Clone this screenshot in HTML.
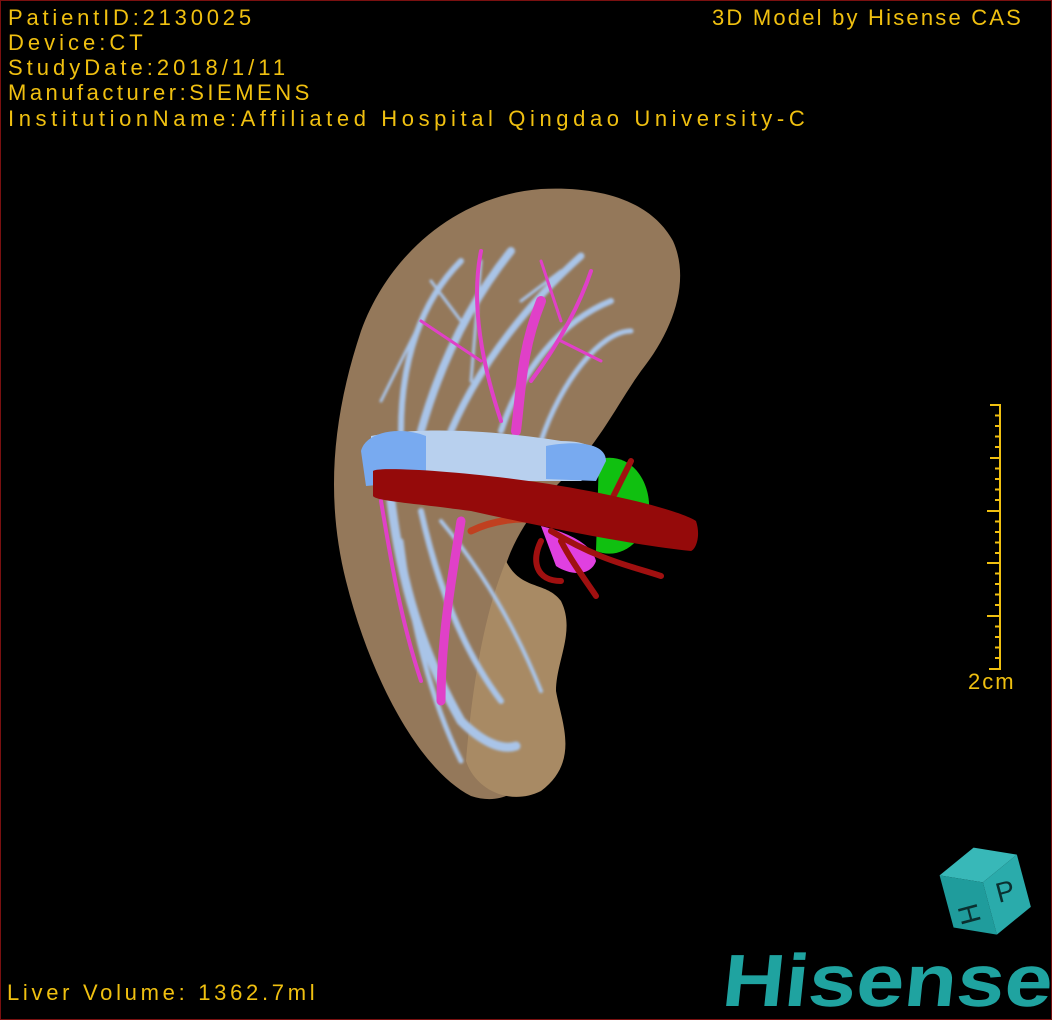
<!DOCTYPE html>
<html><head><meta charset="utf-8"><style>
html,body{margin:0;padding:0;background:#000;}
#c{position:relative;width:1052px;height:1020px;background:#000;overflow:hidden;box-sizing:border-box;border:1px solid #7a1010;}
.t{position:absolute;color:#f0c010;font-family:"Liberation Sans",sans-serif;font-size:22px;letter-spacing:4px;white-space:nowrap;line-height:25px;}
</style></head><body><div id="c">
<svg width="1052" height="1020" style="position:absolute;left:0;top:0">
<defs><filter id="b"><feGaussianBlur stdDeviation="1.2"/></filter></defs>
<path d="M540 188 C600 185 650 200 672 240 C690 280 672 330 640 370 C615 405 600 440 560 480 C530 510 510 540 500 580 C490 640 500 700 520 760 C530 790 500 805 470 795 C420 770 370 680 345 580 C325 500 330 420 360 330 C385 260 450 195 540 188Z" fill="#94785a"/>
<path d="M505 560 C520 590 545 580 560 600 C575 630 555 660 555 690 C560 720 580 760 540 790 C510 805 475 790 465 760 C470 700 480 620 505 560Z" fill="#a88a64"/>
<g fill="none" stroke="#a9c4e8" stroke-linecap="round" filter="url(#b)">
<path d="M420 430 C440 360 470 300 510 250" stroke-width="8"/>
<path d="M450 430 C480 360 530 300 580 255" stroke-width="7"/>
<path d="M500 430 C520 370 560 320 610 300" stroke-width="6"/>
<path d="M400 430 C400 360 420 300 460 260" stroke-width="6"/>
<path d="M540 440 C560 380 600 330 630 330" stroke-width="5"/>
<path d="M390 500 C400 580 420 650 460 720 C480 740 500 750 515 745" stroke-width="9"/>
<path d="M420 510 C440 600 470 660 500 700" stroke-width="6"/>
<path d="M440 520 C490 580 520 640 540 690" stroke-width="4"/>
<path d="M400 540 C410 620 430 700 460 760" stroke-width="5"/>
<path d="M380 400 L430 300 M430 280 L460 320 M520 300 L560 270 M480 260 L470 380" stroke-width="3"/>
</g>
<g fill="none" stroke="#e040c8" stroke-linecap="round">
<path d="M515 430 C520 390 520 350 540 300" stroke-width="10"/>
<path d="M500 420 C480 360 470 300 480 250" stroke-width="4"/>
<path d="M530 380 C560 340 580 300 590 270" stroke-width="4"/>
<path d="M460 520 C450 580 440 640 440 700" stroke-width="9"/>
<path d="M380 500 C390 560 400 620 420 680" stroke-width="4"/>
<path d="M420 320 L480 360 M560 340 L600 360 M540 260 L560 320" stroke-width="3"/>
</g>
<path d="M598 458 C630 450 650 480 648 510 C645 540 620 560 595 550 Z" fill="#10c010"/>
<path d="M370 435 C420 425 500 430 560 440 C590 440 605 450 600 470 L580 480 L370 480 Z" fill="#b8d0ee"/>
<path d="M360 450 C365 430 400 425 425 435 L425 480 L365 485 Z M545 445 C570 440 605 440 605 460 L595 480 L545 478Z" fill="#78aaf0"/>
<path d="M540 525 C560 530 590 540 595 560 C590 575 570 575 555 565 Z" fill="#e040e0"/>
<g fill="none" stroke="#a01010" stroke-linecap="round">
<path d="M540 540 C530 560 535 580 560 580 M550 530 C600 560 630 565 660 575 M560 540 C570 560 585 580 595 595 M600 520 L630 460" stroke-width="6"/>
<path d="M470 530 C490 520 520 515 540 520" stroke="#c04020" stroke-width="7"/>
</g>
<path d="M372 470 C375 465 470 470 560 485 C620 495 680 510 695 520 C700 535 695 548 690 550 C640 545 560 530 470 510 C410 502 375 500 372 495 Z" fill="#950a0a"/>
<g stroke="#f0c010" stroke-width="2">
<line x1="999" y1="403" x2="999" y2="669"/>
<line x1="989" y1="404" x2="999" y2="404"/><line x1="989" y1="457" x2="999" y2="457"/><line x1="986" y1="510" x2="999" y2="510"/><line x1="986" y1="562" x2="999" y2="562"/><line x1="986" y1="615" x2="999" y2="615"/><line x1="988" y1="668" x2="999" y2="668"/>
<path d="M994 414.5h5M994 425h5M994 435.5h5M994 446h5M994 467.5h5M994 478h5M994 488.5h5M994 499h5M994 520.5h5M994 531h5M994 541.5h5M994 552h5M994 572.5h5M994 583h5M994 593.5h5M994 604h5M994 625.5h5M994 636h5M994 646.5h5M994 657h5"/>
</g>
<g transform="translate(985,893) rotate(-15)">
<polygon points="-40,-30 0,-48 40,-30 0,-12" fill="#38b8b8"/>
<polygon points="-40,-30 0,-12 0,42 -40,24" fill="#1f9c9c"/>
<polygon points="0,-12 40,-30 40,24 0,42" fill="#2aabab"/>
<text x="-22" y="14" font-family="Liberation Sans" font-size="28" fill="#0a3030" transform="rotate(90 -22 5)">H</text>
<text x="10" y="12" font-family="Liberation Sans" font-size="28" fill="#0a3030">P</text>
</g>
<text x="720" y="1005" font-family="Liberation Sans" font-weight="bold" font-size="74" fill="#1fa3a0" textLength="330" lengthAdjust="spacingAndGlyphs" transform="skewX(-6) translate(105,0)">Hisense</text>
</svg>
<div class="t" style="left:7px;top:4px;letter-spacing:3.8px">PatientID:2130025</div>
<div class="t" style="left:7px;top:29px">Device:CT</div>
<div class="t" style="left:7px;top:54px">StudyDate:2018/1/11</div>
<div class="t" style="left:7px;top:79px;letter-spacing:3.5px">Manufacturer:SIEMENS</div>
<div class="t" style="left:7px;top:105px;letter-spacing:4.6px">InstitutionName:Affiliated Hospital Qingdao University-C</div>
<div class="t" style="left:711px;top:4px;letter-spacing:2.2px">3D Model by Hisense CAS</div>
<div class="t" style="left:967px;top:668px;letter-spacing:2px">2cm</div>
<div class="t" style="left:6px;top:979px;letter-spacing:3.7px">Liver Volume: 1362.7ml</div>
</div></body></html>
